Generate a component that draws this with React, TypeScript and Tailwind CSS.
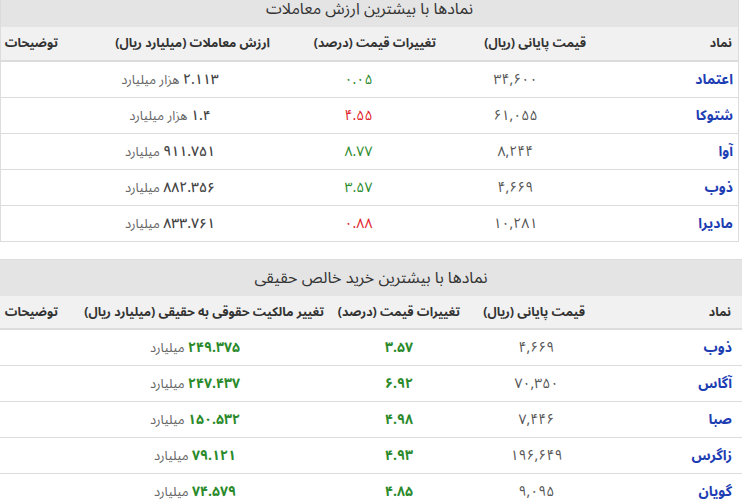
import React from "react";

type Row = { n: string; p: string; c: string; red?: boolean; v: string; u: string };

const t1: Row[] = [
  { n: "اعتماد", p: "۳۴,۶۰۰", c: "۰.۰۵", v: "۲.۱۱۳", u: "هزار میلیارد" },
  { n: "شتوکا", p: "۶۱,۰۵۵", c: "۴.۵۵", red: true, v: "۱.۴", u: "هزار میلیارد" },
  { n: "آوا", p: "۸,۲۴۴", c: "۸.۷۷", v: "۹۱۱.۷۵۱", u: "میلیارد" },
  { n: "ذوب", p: "۴,۶۶۹", c: "۳.۵۷", v: "۸۸۲.۳۵۶", u: "میلیارد" },
  { n: "مادیرا", p: "۱۰,۲۸۱", c: "۰.۸۸", red: true, v: "۸۳۳.۷۶۱", u: "میلیارد" },
];

const t2: Row[] = [
  { n: "ذوب", p: "۴,۶۶۹", c: "۳.۵۷", v: "۲۴۹.۳۷۵", u: "میلیارد" },
  { n: "آگاس", p: "۷۰,۳۵۰", c: "۶.۹۲", v: "۲۴۷.۴۳۷", u: "میلیارد" },
  { n: "صبا", p: "۷,۴۴۶", c: "۴.۹۸", v: "۱۵۰.۵۳۲", u: "میلیارد" },
  { n: "زاگرس", p: "۱۹۶,۶۴۹", c: "۴.۹۳", v: "۷۹.۱۲۱", u: "میلیارد" },
  { n: "گویان", p: "۹,۰۹۵", c: "۴.۸۵", v: "۷۴.۵۷۹", u: "میلیارد" },
];

export default function App() {
  return (
    <div
      dir="rtl"
      className="w-[742px] h-[503px] overflow-hidden bg-white text-[#333] font-[family-name:Noto_Sans_Arabic,DejaVu_Sans,sans-serif]"
    >
      {/* Table 1 */}
      <div className="mt-[-10px] w-[739px] border-x border-t border-[#dcdcdc] mr-auto">
        <div className="h-[36px] bg-[#e4e4e4] flex items-center justify-center text-[16px]">
          نمادها با بیشترین ارزش معاملات
        </div>
        <div className="h-[35px] bg-[#f1f1f1] border-b-2 border-[#dcdcdc] grid grid-cols-[118px_176px_166px_216px_1fr] items-center text-[12.5px] font-bold whitespace-nowrap">
          <div className="pr-[6px]">نماد</div>
          <div className="pr-[34px]">قیمت پایانی (ریال)</div>
          <div className="pr-[8px]">تغییرات قیمت (درصد)</div>
          <div className="pr-[8px]">ارزش معاملات (میلیارد ریال)</div>
          <div className="pr-[4px]">توضیحات</div>
        </div>
        {t1.map((r) => (
          <div
            key={r.n}
            className="h-[36px] border-b border-[#dcdcdc] grid grid-cols-[118px_176px_166px_216px_1fr] items-center text-[14px] whitespace-nowrap"
          >
            <div className="pr-[5px] font-bold text-[#1d3db3]">{r.n}</div>
            <div className="pr-[33px] text-center text-[#555]">{r.p}</div>
            <div className={`pr-[5px] text-center ${r.red ? "text-[#e0232b]" : "text-[#2b8a2b]"}`}>{r.c}</div>
            <div className="text-center text-[#666] text-[13px]">
              <span className="font-medium text-[#444] text-[14px]">{r.v}</span> {r.u}
            </div>
            <div />
          </div>
        ))}
      </div>

      {/* Table 2 */}
      <div className="mt-[17px] w-[743px] border-l border-t border-[#dcdcdc] mr-auto">
        <div className="h-[36px] bg-[#e4e4e4] flex items-center justify-center text-[16px]">
          نمادها با بیشترین خرید خالص حقیقی
        </div>
        <div className="h-[34px] bg-[#f1f1f1] border-b-2 border-[#dcdcdc] grid grid-cols-[123px_150px_135px_273px_1fr] items-center text-[12.5px] font-bold whitespace-nowrap">
          <div className="pr-[11px]">نماد</div>
          <div className="pr-[34px]">قیمت پایانی (ریال)</div>
          <div className="pr-[9px]">تغییرات قیمت (درصد)</div>
          <div className="pr-[10px]">تغییر مالکیت حقوقی به حقیقی (میلیارد ریال)</div>
          <div className="pr-[3px]">توضیحات</div>
        </div>
        {t2.map((r) => (
          <div
            key={r.n}
            className="h-[36px] border-b border-[#dcdcdc] grid grid-cols-[123px_150px_135px_273px_1fr] items-center text-[14px] whitespace-nowrap"
          >
            <div className="pr-[10px] font-bold text-[#1d3db3]">{r.n}</div>
            <div className="pr-[15px] text-center text-[#555]">{r.p}</div>
            <div className="pr-[5px] text-center font-bold text-[#2b8a2b]">{r.c}</div>
            <div className="pr-[5px] text-center text-[#666] text-[13px]">
              <span className="font-bold text-[#2b8a2b] text-[14px]">{r.v}</span> {r.u}
            </div>
            <div />
          </div>
        ))}
      </div>
    </div>
  );
}
